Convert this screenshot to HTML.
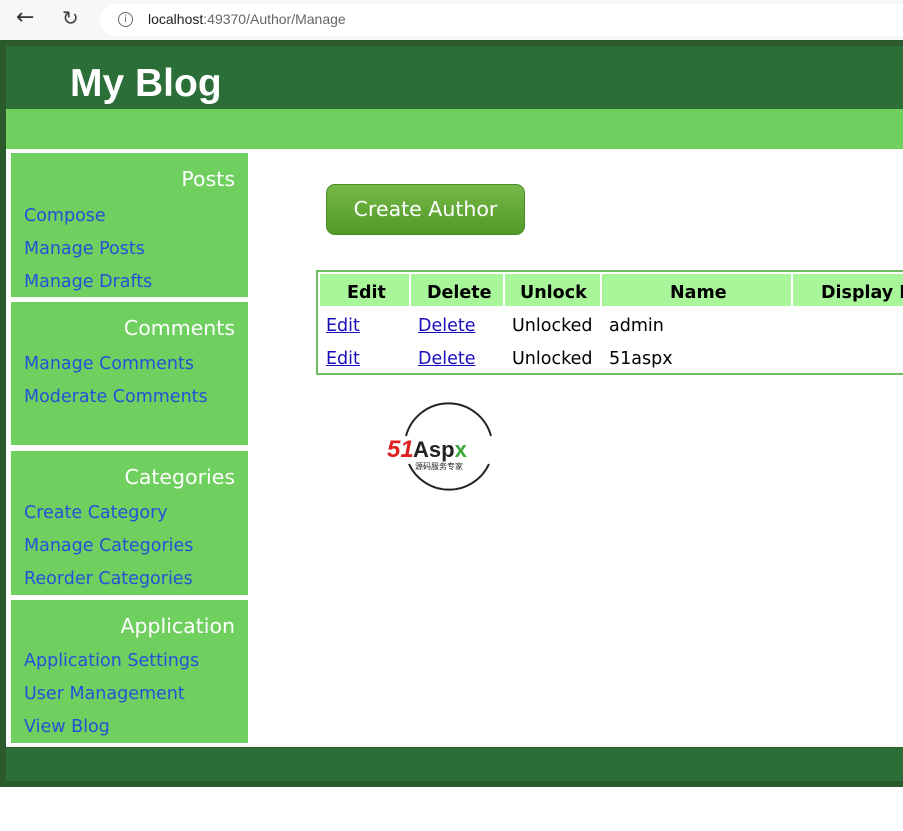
<!DOCTYPE html>
<html><head><style>
html,body{margin:0;width:903px;height:831px;overflow:hidden}
body{background:#fff;font-family:"DejaVu Sans","Liberation Sans",sans-serif;position:relative}
.a{position:absolute}
.box{position:absolute;left:11px;width:237px;background:#6fcf5f}
.box h3{margin:0;position:absolute;right:13px;top:14px;font-weight:normal;color:#fff;font-size:20.5px}
.box a{position:absolute;left:13px;color:#2750d8;font-size:17.5px;text-decoration:none;white-space:nowrap}
</style></head><body>
<div class="a" style="left:0;top:0;width:903px;height:40px;background:#f7f7f7"></div>
<div class="a" style="left:100px;top:4px;width:820px;height:32px;border-radius:16px;background:#fff"></div>
<div class="a" style="left:16px;top:5px;font-size:22px;color:#333">&#8592;</div>
<div class="a" style="left:62px;top:6px;font-size:20px;color:#444">&#8635;</div>
<div class="a" style="left:118px;top:12px;width:13px;height:13px;border:1.5px solid #666;border-radius:50%;font-size:10px;text-align:center;line-height:13px;color:#666">i</div>
<div class="a" style="left:148px;top:11px;font-size:14px;color:#222;font-family:'Liberation Sans',sans-serif">localhost<span style="color:#666">:49370/Author/Manage</span></div>
<div class="a" style="left:0;top:40px;width:903px;height:747px;background:#2b5a2c"></div>
<div class="a" style="left:6px;top:46px;width:897px;height:63px;background:#2b6e38"></div>
<div class="a" style="left:70px;top:62px;font-family:'Liberation Sans',sans-serif;font-weight:bold;font-size:39px;color:#fff">My Blog</div>
<div class="a" style="left:6px;top:109px;width:897px;height:40px;background:#6fcf5f"></div>
<div class="a" style="left:6px;top:149px;width:897px;height:598px;background:#fff"></div>
<div class="a" style="left:6px;top:748px;width:897px;height:33px;background:#2b6e38"></div>

<div class="box" style="top:153px;height:144px"><h3>Posts</h3><a style="top:53px">Compose</a><a style="top:86px">Manage Posts</a><a style="top:119px">Manage Drafts</a></div>
<div class="box" style="top:302px;height:143px"><h3>Comments</h3><a style="top:52px">Manage Comments</a><a style="top:85px">Moderate Comments</a></div>
<div class="box" style="top:451px;height:144px"><h3>Categories</h3><a style="top:52px">Create Category</a><a style="top:85px">Manage Categories</a><a style="top:118px">Reorder Categories</a></div>
<div class="box" style="top:600px;height:143px"><h3>Application</h3><a style="top:51px">Application Settings</a><a style="top:84px">User Management</a><a style="top:117px">View Blog</a></div>

<div class="a" style="left:326px;top:184px;width:197px;height:49px;border:1px solid #4d8a2a;border-radius:9px;background:linear-gradient(#78b84a,#4f9a26);color:#fff;font-size:20.5px;text-align:center;line-height:48px">Create Author</div>

<div class="a" style="left:316px;top:270px;width:600px;height:101px;border:2px solid #6cbf60;border-right:none"></div>
<div class="a" style="left:320px;top:274px;width:89px;height:32px;background:#a8f59a"></div>
<div class="a" style="left:411px;top:274px;width:92px;height:32px;background:#a8f59a"></div>
<div class="a" style="left:505px;top:274px;width:95px;height:32px;background:#a8f59a"></div>
<div class="a" style="left:602px;top:274px;width:189px;height:32px;background:#a8f59a"></div>
<div class="a" style="left:793px;top:274px;width:110px;height:32px;background:#a8f59a"></div>
<div class="a" style="left:347px;top:283px;font-weight:bold;font-size:17.5px">Edit</div>
<div class="a" style="left:427px;top:283px;font-weight:bold;font-size:17.5px">Delete</div>
<div class="a" style="left:520px;top:283px;font-weight:bold;font-size:17.5px">Unlock</div>
<div class="a" style="left:670px;top:283px;font-weight:bold;font-size:17.5px">Name</div>
<div class="a" style="left:821px;top:283px;font-weight:bold;font-size:17.5px;white-space:nowrap">Display Name</div>
<div class="a" style="left:326px;top:316px;font-size:17.5px;color:#1a0dbb;text-decoration:underline">Edit</div>
<div class="a" style="left:418px;top:316px;font-size:17.5px;color:#1a0dbb;text-decoration:underline">Delete</div>
<div class="a" style="left:512px;top:316px;font-size:17.5px">Unlocked</div>
<div class="a" style="left:609px;top:316px;font-size:17.5px">admin</div>
<div class="a" style="left:326px;top:349px;font-size:17.5px;color:#1a0dbb;text-decoration:underline">Edit</div>
<div class="a" style="left:418px;top:349px;font-size:17.5px;color:#1a0dbb;text-decoration:underline">Delete</div>
<div class="a" style="left:512px;top:349px;font-size:17.5px">Unlocked</div>
<div class="a" style="left:609px;top:349px;font-size:17.5px">51aspx</div>

<svg class="a" style="left:385px;top:400px" width="130" height="96">
<path d="M21 36 A44 44 0 0 1 106 36" fill="none" stroke="#222" stroke-width="2"/>
<path d="M24 64 A44 44 0 0 0 104 64" fill="none" stroke="#222" stroke-width="2"/>
<text x="2" y="57" font-family="Liberation Sans" font-weight="bold" font-style="italic" font-size="24" fill="#e02020">51</text>
<text x="28" y="57" font-family="Liberation Sans" font-weight="bold" font-size="22" fill="#222">Asp<tspan fill="#3aa83a">x</tspan></text>
<text x="30" y="69" font-family="Noto Sans CJK SC,sans-serif" font-size="8" fill="#222">源码服务专家</text>
</svg>
</body></html>
